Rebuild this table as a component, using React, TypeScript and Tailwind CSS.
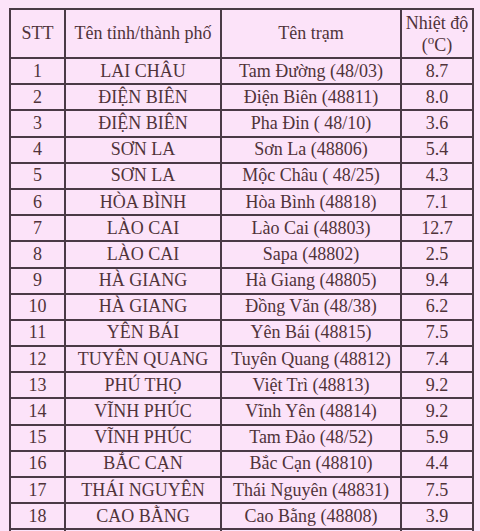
import React from 'react';

const rows: [number, string, string, string][] = [
  [1, 'LAI CHÂU', 'Tam Đường (48/03)', '8.7'],
  [2, 'ĐIỆN BIÊN', 'Điện Biên (48811)', '8.0'],
  [3, 'ĐIỆN BIÊN', 'Pha Đin ( 48/10)', '3.6'],
  [4, 'SƠN LA', 'Sơn La (48806)', '5.4'],
  [5, 'SƠN LA', 'Mộc Châu ( 48/25)', '4.3'],
  [6, 'HÒA BÌNH', 'Hòa Bình (48818)', '7.1'],
  [7, 'LÀO CAI', 'Lào Cai (48803)', '12.7'],
  [8, 'LÀO CAI', 'Sapa (48802)', '2.5'],
  [9, 'HÀ GIANG', 'Hà Giang (48805)', '9.4'],
  [10, 'HÀ GIANG', 'Đồng Văn (48/38)', '6.2'],
  [11, 'YÊN BÁI', 'Yên Bái (48815)', '7.5'],
  [12, 'TUYÊN QUANG', 'Tuyên Quang (48812)', '7.4'],
  [13, 'PHÚ THỌ', 'Việt Trì (48813)', '9.2'],
  [14, 'VĨNH PHÚC', 'Vĩnh Yên (48814)', '9.2'],
  [15, 'VĨNH PHÚC', 'Tam Đảo (48/52)', '5.9'],
  [16, 'BẮC CẠN', 'Bắc Cạn (48810)', '4.4'],
  [17, 'THÁI NGUYÊN', 'Thái Nguyên (48831)', '7.5'],
  [18, 'CAO BẰNG', 'Cao Bằng (48808)', '3.9'],
];

const cell =
  "border-2 border-[#4a3a46] text-center align-middle p-0 font-normal text-[18px] leading-[21px]";

export default function App() {
  return (
    <div className="min-h-[531px] bg-[#fce3f9] pt-2 pl-[9px] text-[#50333a] font-['Liberation_Serif','Times_New_Roman',serif]">
      <table className="border-collapse w-[463px] table-fixed">
        <colgroup>
          <col className="w-[55px]" />
          <col className="w-[156px]" />
          <col className="w-[180px]" />
          <col className="w-[72px]" />
        </colgroup>
        <thead>
          <tr className="h-[49px]">
            <th className={cell}>STT</th>
            <th className={cell}>Tên tỉnh/thành phố</th>
            <th className={cell}>Tên trạm</th>
            <th className={`${cell} !leading-[22px]`}>
              Nhiệt độ
              <br />
              (<sup className="text-[13px] -top-[0.5em]">o</sup>C)
            </th>
          </tr>
        </thead>
        <tbody>
          {rows.map(([n, province, station, temp]) => (
            <tr key={n} className="h-[26.2px]">
              <td className={cell}>{n}</td>
              <td className={cell}>{province}</td>
              <td className={cell}>{station}</td>
              <td className={cell}>{temp}</td>
            </tr>
          ))}
          <tr className="h-[26px]">
            <td className={cell}></td>
            <td className={cell}></td>
            <td className={cell}></td>
            <td className={cell}></td>
          </tr>
        </tbody>
      </table>
    </div>
  );
}
